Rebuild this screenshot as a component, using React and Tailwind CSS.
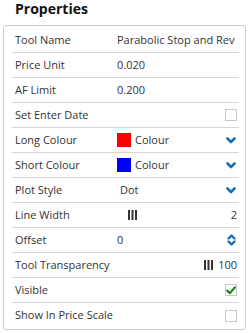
import React from 'react';

const Chevron = () => (
  <svg width="10" height="7" viewBox="0 0 10 7" className="block">
    <polyline points="1.5,1.5 5,5 8.5,1.5" fill="none" stroke="#1a6fb3" strokeWidth="2.6" strokeLinecap="round" strokeLinejoin="round" />
  </svg>
);

const Spinner = () => (
  <svg width="9" height="12" viewBox="0 0 9 12" className="block">
    <polyline points="1.5,4.5 4.5,1.5 7.5,4.5" fill="none" stroke="#1a6fb3" strokeWidth="2.4" strokeLinecap="round" strokeLinejoin="round" />
    <polyline points="1.5,7.5 4.5,10.5 7.5,7.5" fill="none" stroke="#1a6fb3" strokeWidth="2.4" strokeLinecap="round" strokeLinejoin="round" />
  </svg>
);

const Bars = () => (
  <svg width="9" height="10" viewBox="0 0 9 10" className="block">
    <rect x="0" y="0" width="2" height="10" fill="#333" />
    <rect x="3.5" y="0" width="2" height="10" fill="#333" />
    <rect x="7" y="0" width="2" height="10" fill="#333" />
  </svg>
);

const Checkbox = ({ checked }) => (
  <div className="w-[12px] h-[12px] border border-[#c8c8c8] bg-white flex items-center justify-center">
    {checked && (
      <svg width="10" height="9" viewBox="0 0 10 9" className="block">
        <polyline points="1.2,4.6 3.8,7.2 8.8,1.4" fill="none" stroke="#1e8a1e" strokeWidth="2.2" strokeLinecap="round" strokeLinejoin="round" />
      </svg>
    )}
  </div>
);

const Row = ({ label, last, children }) => (
  <div className={`h-[25px] flex items-center pl-[3px] pr-[2px] ${last ? '' : 'border-b border-[#d6d6d6]'}`}>
    <div className="w-[102px] shrink-0 whitespace-nowrap">{label}</div>
    <div className="flex-1 flex items-center min-w-0">{children}</div>
  </div>
);

export default function App() {
  return (
    <div className="w-[251px] h-[333px] bg-white text-[#333] text-[11px] overflow-hidden" style={{ fontFamily: '"Open Sans", "Liberation Sans", sans-serif' }}>
      <div className="pl-[15px] text-[14px] leading-[17px] font-bold text-[#111]">Properties</div>
      <div className="mt-[8px] ml-[3px] w-[243px] border border-[#cccccc] rounded-[3px] pl-[8px] pr-[6px] pt-[2px] pb-[1px]">
        <Row label="Tool Name">
          <span className="whitespace-nowrap">Parabolic Stop and Rev</span>
        </Row>
        <Row label="Price Unit">0.020</Row>
        <Row label="AF Limit">0.200</Row>
        <Row label="Set Enter Date">
          <div className="ml-auto"><Checkbox /></div>
        </Row>
        <Row label="Long Colour">
          <div className="w-[14px] h-[14px] bg-[#ff0000]" />
          <span className="ml-[4px]">Colour</span>
          <div className="ml-auto mr-[1px]"><Chevron /></div>
        </Row>
        <Row label="Short Colour">
          <div className="w-[14px] h-[14px] bg-[#0000ff]" />
          <span className="ml-[4px]">Colour</span>
          <div className="ml-auto mr-[1px]"><Chevron /></div>
        </Row>
        <Row label="Plot Style">
          <span className="ml-[3px]">Dot</span>
          <div className="ml-auto mr-[1px]"><Chevron /></div>
        </Row>
        <Row label="Line Width">
          <div className="ml-[11px]"><Bars /></div>
          <span className="ml-auto">2</span>
        </Row>
        <Row label="Offset">
          <span>0</span>
          <div className="ml-auto mr-[1px]"><Spinner /></div>
        </Row>
        <Row label="Tool Transparency">
          <div className="ml-auto"><Bars /></div>
          <span className="ml-[5px]">100</span>
        </Row>
        <Row label="Visible">
          <div className="ml-auto"><Checkbox checked /></div>
        </Row>
        <Row label="Show In Price Scale" last>
          <div className="ml-auto"><Checkbox /></div>
        </Row>
      </div>
    </div>
  );
}
